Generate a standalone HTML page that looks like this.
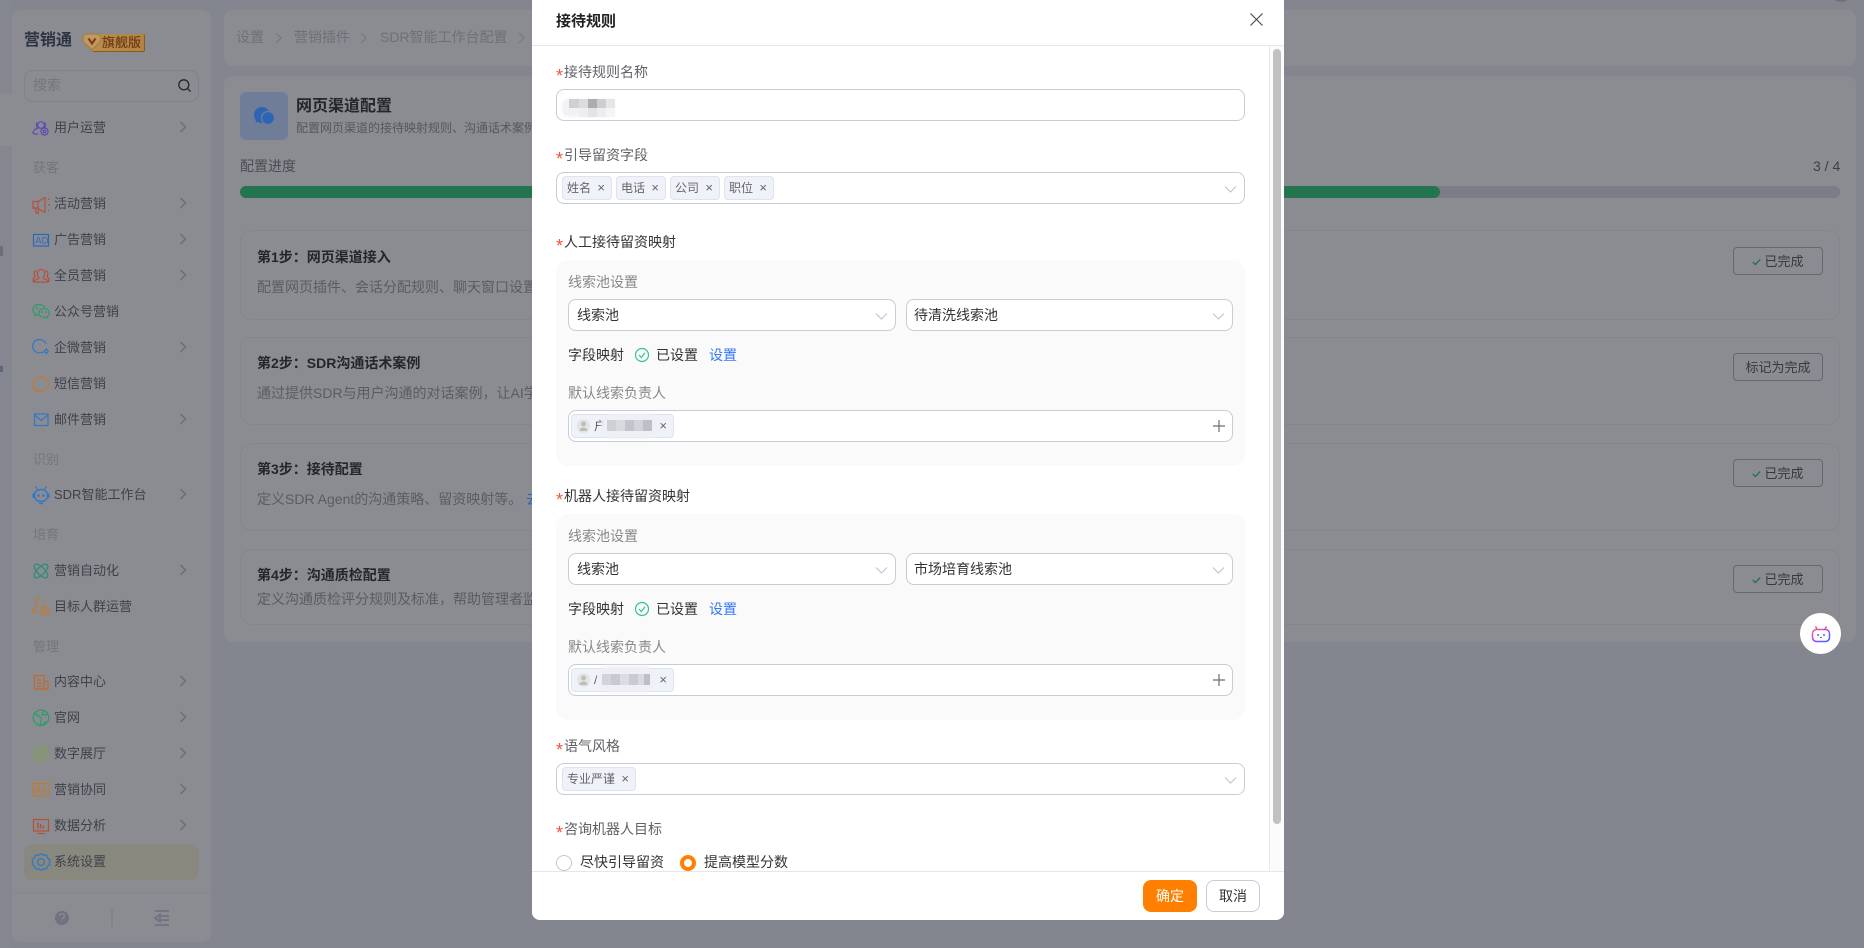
<!DOCTYPE html>
<html lang="zh-CN"><head><meta charset="utf-8"><title>接待规则</title>
<style>
*{box-sizing:border-box}
html,body{margin:0;padding:0;width:1864px;height:948px;overflow:hidden;background:#83868f;font-family:"Liberation Sans","Noto Sans CJK SC",sans-serif}
.a,.t,svg{position:absolute}
.t{white-space:nowrap;line-height:20px;font-size:14px}
.panel{position:absolute;background:#8b8c91;border-radius:9px}
.m{font-size:13px;color:#3f4148;left:54px}
.sec{font-size:13px;color:#74767c;left:33px}
.card{position:absolute;left:240px;width:1600px;border:1px solid #84868d;border-radius:12px}
.st{left:257px;font-weight:700;color:#24262c}
.sd{left:257px;color:#5a5c62}
.btn{position:absolute;left:1733px;width:90px;height:28px;border:1px solid #66686f;border-radius:4px;font-size:13px;color:#36383e;line-height:27px;text-align:center;white-space:nowrap}
.btn svg{position:static;display:inline-block;margin-right:3px;vertical-align:0}
#modal{position:absolute;left:532px;top:0;width:752px;height:920px;background:#fff;border-radius:0 0 8px 8px;overflow:hidden}
#modal .t{color:#333}
.lb{color:#5f6166!important}
.star{position:absolute;color:#f5533d;font-size:18px;line-height:20px}
.in{position:absolute;height:32px;background:#fff;border:1px solid #c9cbd8;border-radius:8px}
.tag{position:absolute;height:24px;background:#f0f2fa;border:1px solid #dfe2ef;border-radius:4px;font-size:12px;line-height:22px;color:#666;padding-left:4px;white-space:nowrap}
.tag i{position:absolute;right:6px;top:0;font-style:normal;font-size:13px;color:#666}
.box{position:absolute;left:24px;width:689px;height:206px;background:#fafafa;border-radius:12px}
.gl{color:#888!important}
.pix{position:absolute;background:#c6c7cc}
</style></head><body>

<!-- page background edge -->
<div class="a" style="left:0;top:93px;width:12px;height:53px;background:#8b8c91"></div>
<div class="a" style="left:0;top:0;width:12px;height:94px;background:#84878f;border-radius:0 0 8px 0"></div>
<div class="a" style="left:0;top:146px;width:12px;height:802px;background:#84878f;border-radius:0 8px 0 0"></div>
<div class="a" style="left:0;top:246px;width:3px;height:10px;background:#5c5e66;opacity:.6"></div>
<div class="a" style="left:0;top:366px;width:3px;height:6px;background:#4c5a72;opacity:.7"></div>
<div class="a" style="left:1830px;top:-20px;width:22px;height:22px;border-radius:50%;background:#6f7178"></div>

<!-- sidebar -->
<div class="panel" style="left:12px;top:10px;width:199px;height:932px"></div>
<div class="t" style="left:24px;top:31px;font-size:16px;font-weight:700;color:#2d3344">营销通</div>
<div class="a" style="left:92px;top:34px;width:53px;height:18px;background:linear-gradient(90deg,#b98f4e,#b28443);border-radius:2px;border-right:1px solid #8a5a22;border-bottom:1px solid #8a5a22"></div>
<svg style="left:82px;top:33px" width="20" height="20" viewBox="0 0 20 20"><path d="M5 1h9c3 0 5 2 5 4.500 0 2-1 3.500-2.500 5L10 17 2.500 10C1 8.500 0.500 7 1 5 1.500 2.500 3 1 5 1Z" fill="#c09a5c" stroke="#a77a3c"/><path d="M6.500 5.500 10 10.500l3.500-5" fill="none" stroke="#7a3b1a" stroke-width="2"/></svg>
<div class="t" style="left:102px;top:33px;font-size:13px;color:#6d3917;font-weight:500">旗舰版</div>
<div class="a" style="left:24px;top:70px;width:175px;height:32px;border:1px solid #808289;border-radius:9px"></div>
<div class="t" style="left:33px;top:75px;color:#74767c">搜索</div>
<svg style="left:177px;top:78px" width="15" height="15" viewBox="0 0 15 15" fill="none" stroke="#24262c" stroke-width="1.300"><circle cx="6.800" cy="6.800" r="5"/><path d="m10.500 10.500 3 3"/></svg>

<div class="t m" style="top:118px">用户运营</div>
<div class="t sec" style="top:158px">获客</div>
<div class="t m" style="top:194px">活动营销</div>
<div class="t m" style="top:230px">广告营销</div>
<div class="t m" style="top:266px">全员营销</div>
<div class="t m" style="top:302px">公众号营销</div>
<div class="t m" style="top:338px">企微营销</div>
<div class="t m" style="top:374px">短信营销</div>
<div class="t m" style="top:410px">邮件营销</div>
<div class="t sec" style="top:450px">识别</div>
<div class="t m" style="top:485px">SDR智能工作台</div>
<div class="t sec" style="top:525px">培育</div>
<div class="t m" style="top:561px">营销自动化</div>
<div class="t m" style="top:597px">目标人群运营</div>
<div class="t sec" style="top:637px">管理</div>
<div class="t m" style="top:672px">内容中心</div>
<div class="t m" style="top:708px">官网</div>
<div class="t m" style="top:744px">数字展厅</div>
<div class="t m" style="top:780px">营销协同</div>
<div class="t m" style="top:816px">数据分析</div>
<div class="a" style="left:24px;top:844px;width:175px;height:36px;background:#89887f;border-radius:9px"></div>
<div class="t m" style="top:852px">系统设置</div>

<svg style="left:0;top:0;width:220px;height:948px" viewBox="0 0 220 948" fill="none">
<g stroke="#6e7078" stroke-width="1.600" transform="translate(1.500 0)">
<path d="m179 122 5 5-5 5M179 198 184 203 179 208M179 234l5 5-5 5M179 270l5 5-5 5M179 342l5 5-5 5M179 414l5 5-5 5M179 489l5 5-5 5M179 565l5 5-5 5M179 676l5 5-5 5M179 712l5 5-5 5M179 748l5 5-5 5M179 784l5 5-5 5M179 820l5 5-5 5"/>
</g>
<g stroke-width="1.200">
<!-- user ops -->
<g stroke="#5f4bb4"><circle cx="41" cy="125" r="3.300"/><path d="M37.500 122.500c-2 1-1 5 .3 5.500-2.800 1-4.800 3-4.800 5 1 1.500 3.500 1.500 5 .5M44.500 122.500c1.500 1 1.300 4-.2 5.300 1 .2 2 .6 2.700 1.200"/><circle cx="44.500" cy="131.500" r="3.600"/><circle cx="44.500" cy="131.500" r="1.400"/></g>
<!-- megaphone -->
<g stroke="#b5503a"><path d="M33 201.500h5v6.500h-5ZM38 201.500l7-4v15l-7-4M35 208l1 5h2.500l-.7-5M48 199.500l1.500-1M48 205h2M48 210l1.500 1"/></g>
<!-- AD -->
<rect x="33.500" y="234.500" width="15" height="11.500" stroke="#2f66c0"/>
<!-- staff -->
<g stroke="#b5503a"><path d="M41 269.500c-2.500 0-3.800 2-3.800 4 0 1.500.7 2.800 1.500 3.800v1.200l-4.700 2v1.500h14v-1.500l-4.700-2v-1.200c.8-1 1.500-2.300 1.500-3.800 0-2-1.300-4-3.800-4ZM36.500 270.500c-1.800.5-2.500 2-2.300 3.800.1 1 .6 1.800 1 2.500l-2 1.500v3h1.800M45.500 270.500c1.800.5 2.500 2 2.300 3.800-.1 1-.6 1.800-1 2.500l2 1.500v3h-1.800"/></g>
<!-- wechat -->
<g stroke="#2c9c6a"><path d="M44.500 307.500c-.8-1.800-3-3-5.500-3-3.300 0-6 2.300-6 5.200 0 1.600.9 3 2.200 4l-.5 2 2.400-1.100c.5.100 1 .2 1.500.2"/><ellipse cx="44" cy="313" rx="5.200" ry="4.500"/><path d="m46.500 317 1 1.800"/><circle cx="37" cy="308.500" r=".4"/><circle cx="42" cy="312" r=".4"/><circle cx="46" cy="312" r=".4"/></g>
<!-- wecom -->
<g stroke="#2f78c8"><path d="M39.500 339.500c-3.800 0-6.800 3-6.800 6.700 0 3.700 3 6.600 6.800 6.600 1 0 2-.2 3-.6l1 .3M46 344c-.8-2.600-3.500-4.500-6.500-4.500"/><path d="m46.300 349 2 2.300-2 2.200-2-2.200Z"/></g>
<!-- sms -->
<g stroke="#c4782f"><path d="M40.700 377c-4.200 0-7.700 3.200-7.700 7.200 0 2.300 1.100 4.300 2.700 5.600l-.5 2.200 2.800-1c.9.300 1.800.4 2.700.4 4.200 0 7.800-3.200 7.800-7.200s-3.600-7.200-7.800-7.200Z"/></g>
<!-- mail -->
<g stroke="#2f78c8"><rect x="34.500" y="414" width="13.500" height="11.500"/><path d="m34.500 415 6.700 5.300 6.800-5.300"/></g>
<!-- SDR robot -->
<g stroke="#2f78c8" stroke-width="1.400"><path d="M41 489.500c-4 0-6.500 2.500-6.500 6s2.500 6 6.500 6 6.500-2.500 6.500-6-2.500-6-6.500-6ZM34.500 493.500c-1 .5-1.500 1.200-1.500 2.200s.5 1.800 1.500 2.200M47.500 493.500c1 .5 1.500 1.200 1.500 2.200s-.5 1.800-1.500 2.200M37 489l-1-2.500M45 489l1-2.500M39 503.500h4"/><circle cx="38.500" cy="495.500" r=".6"/><circle cx="43.500" cy="495.500" r=".6"/></g>
<!-- automation -->
<g stroke="#2b8f7a" stroke-width="1.300"><ellipse cx="41" cy="571" rx="3.800" ry="8.800" transform="rotate(45 41 571)"/><ellipse cx="41" cy="571" rx="3.800" ry="8.800" transform="rotate(-45 41 571)"/></g>
<!-- audience -->
<g stroke="#c4782f"><path d="M40 597.500c-2.600 0-4.300 2-4.300 4.300 0 1.500.7 2.700 1.600 3.500-.5 1.500-2 2.200-3.300 3.200-.8.700-1.300 2-1.300 3.500h6.500M43 600.500c.7 1 1 1.800 1 3"/><circle cx="44.800" cy="610.500" r="4.200"/><circle cx="44.800" cy="610.500" r="1.700"/></g>
<!-- content -->
<g stroke="#c4682a"><path d="M34.500 675.500h9.500v13.500h-9.500Z"/><path d="M44 681h4v8h-4M37 680h3.500M37 683h5M37 686h5"/></g>
<!-- website -->
<g stroke="#2c9c6a" stroke-width="1.300"><circle cx="41" cy="717.700" r="7.700"/><path d="M34 714.500c2-.5 3.500 0 4.500 1.500 1 1.200 2.500 1 3 2.500.4 1.300-.7 2.500-1 3.500-.2 1 .2 2.300.7 3.200M45 710.800c-.8 1.200-2.300 1.500-3 2.700-.4.900.6 1.700 1.800 1.500 1.400-.2 2.600-.6 4.300-.2M43 723.500c1-1 3-1.500 4.500-1.500"/></g>
<!-- hall -->
<g stroke="#7fa73e" stroke-width="1.200"><circle cx="41" cy="754" r="7.200"/><path d="M39.800 757.800c-1.800.8-3-1.500-1.800-2.800l3.200-3.500c1.300-1.300 3.300.2 2.500 1.800l-2 2.200"/></g>
<!-- collaboration -->
<g stroke="#c4782f"><path d="M49.500 787v-3.500H33v12.500h11"/><circle cx="38" cy="787.500" r="1.800"/><path d="M35 793c.7-2.500 5.300-2.500 6 0M43 786h3.500M43 789h1"/><circle cx="46.500" cy="792.500" r="3"/></g>
<!-- analysis -->
<g stroke="#b5503a"><rect x="33.500" y="819.500" width="15" height="11.500"/><path d="M37 833.500h7.500"/></g>
<path d="M38 822.500v6M40.700 824v4.500M43.400 825.500v3" stroke="#b5503a" stroke-width="1.500"/>
<!-- settings -->
<g stroke="#2f78c8" stroke-width="1.300"><path d="M41 853.500l2.500 1.800 3-.2 1.200 2.800 2.300 1.900-.9 2.200.9 2.200-2.300 1.900-1.200 2.800-3-.2-2.500 1.800-2.500-1.800-3 .2-1.200-2.800-2.300-1.900.9-2.200-.9-2.200 2.300-1.900 1.200-2.800 3 .2Z"/><circle cx="41" cy="862" r="3.400"/></g>
</g>
<text x="35.300" y="243.500" font-family="Liberation Sans" font-size="9.500" fill="#2f66c0">AD</text>
<path d="M12 893h199" stroke="#84868d"/>
<circle cx="62" cy="918" r="7" fill="#6f7280"/>
<path d="M59.500 916c0-3 5-3 5 0 0 2-2.500 2-2.500 3.500M62 921v1" stroke="#8b8c91" stroke-width="1.300"/>
<path d="M112 908v19" stroke="#797b83"/>
<path d="M155 911h14M161 916h8M161 920h8M155 925h14M160 914.500l-5 3.500 5 3.500Z" stroke="#6f7280" stroke-width="1.800"/>
</svg>

<!-- breadcrumb -->
<div class="panel" style="left:224px;top:10px;width:1632px;height:56px"></div>
<div class="t" style="left:236px;top:27px;color:#6d7076">设置</div>
<div class="t" style="left:294px;top:27px;color:#6d7076">营销插件</div>
<div class="t" style="left:380px;top:27px;color:#6d7076">SDR智能工作台配置</div>
<svg style="left:270px;top:30px" width="260" height="16" fill="none" stroke="#74767d" stroke-width="1.100"><path d="m6 3 5 5-5 5M91 3l5 5-5 5M249 3l5 5-5 5"/></svg>

<!-- main -->
<div class="panel" style="left:224px;top:76px;width:1632px;height:566px"></div>
<div class="a" style="left:240px;top:92px;width:48px;height:48px;background:#6f7d98;border-radius:6px"></div>
<svg style="left:253px;top:106px" width="24" height="20" viewBox="0 0 24 20"><path d="M9 1a8 8 0 0 0-8 8c0 2.500 1 4 2 5l-.5 3 3-1.500A9 9 0 0 0 9 16Z" fill="#2c65b4"/><circle cx="9" cy="9" r="8" fill="#2c65b4"/><circle cx="15" cy="12" r="6.500" fill="#2c65b4" stroke="#6f7d98" stroke-width="1.300"/></svg>
<div class="t" style="left:296px;top:97px;font-size:16px;font-weight:700;color:#24262c">网页渠道配置</div>
<div class="t" style="left:296px;top:118px;font-size:12px;color:#55575e">配置网页渠道的接待映射规则、沟通话术案例等</div>
<div class="t" style="left:240px;top:156px;color:#4b4d54">配置进度</div>
<div class="t" style="left:1813px;top:156px;color:#3d3f46">3 / 4</div>
<div class="a" style="left:240px;top:186px;width:1600px;height:12px;background:#7a7d88;border-radius:6px"></div>
<div class="a" style="left:240px;top:186px;width:1200px;height:12px;background:#24754f;border-radius:6px"></div>

<div class="card" style="top:230px;height:90px"></div>
<div class="card" style="top:337px;height:88px"></div>
<div class="card" style="top:443px;height:88px"></div>
<div class="card" style="top:549px;height:76px"></div>

<div class="t st" style="top:247px">第1步：网页渠道接入</div>
<div class="t sd" style="top:277px">配置网页插件、会话分配规则、聊天窗口设置等</div>
<div class="t st" style="top:353px">第2步：SDR沟通话术案例</div>
<div class="t sd" style="top:383px">通过提供SDR与用户沟通的对话案例，让AI学习</div>
<div class="t st" style="top:459px">第3步：接待配置</div>
<div class="t sd" style="top:489px">定义SDR Agent的沟通策略、留资映射等。 <span style="color:#2b62b5">去配置</span></div>
<div class="t st" style="top:565px">第4步：沟通质检配置</div>
<div class="t sd" style="top:589px">定义沟通质检评分规则及标准，帮助管理者监督</div>

<div class="btn" style="top:247px"><svg width="9" height="8" viewBox="0 0 9 8" fill="none" stroke="#24754f" stroke-width="1.400"><path d="m.8 4 2.600 2.500L8.200 1.500"/></svg>已完成</div>
<div class="btn" style="top:353px">标记为完成</div>
<div class="btn" style="top:459px"><svg width="9" height="8" viewBox="0 0 9 8" fill="none" stroke="#24754f" stroke-width="1.400"><path d="m.8 4 2.600 2.500L8.200 1.500"/></svg>已完成</div>
<div class="btn" style="top:565px"><svg width="9" height="8" viewBox="0 0 9 8" fill="none" stroke="#24754f" stroke-width="1.400"><path d="m.8 4 2.600 2.500L8.200 1.500"/></svg>已完成</div>

<!-- float bot -->
<div class="a" style="left:1800px;top:613px;width:41px;height:41px;background:#fff;border-radius:50%"></div>
<svg style="left:1810px;top:624px" width="22" height="20" viewBox="0 0 22 20" fill="none"><defs><linearGradient id="g" x1="0" y1="0" x2="1" y2="1"><stop offset="0" stop-color="#ff5a8a"/><stop offset=".5" stop-color="#a04cf0"/><stop offset="1" stop-color="#2a6cff"/></linearGradient></defs><rect x="2.500" y="5.500" width="17" height="12" rx="4" stroke="url(#g)" stroke-width="1.500"/><path d="M7 5 5.500 2.500M15 5l1.500-2.500" stroke="#f0507a" stroke-width="1.500"/><circle cx="8" cy="11" r="1" fill="#7a55f0"/><circle cx="14" cy="11" r="1" fill="#7a55f0"/><path d="M10 13.500h2" stroke="#7a55f0"/></svg>

<!-- modal -->
<div id="modal">
<div class="t" style="left:24px;top:12px;font-size:15px;font-weight:700;color:#222">接待规则</div>
<svg style="left:717px;top:12px" width="15" height="15" fill="none" stroke="#4a4d55" stroke-width="1.200"><path d="m1.500 1.500 12 12M13.500 1.500l-12 12"/></svg>
<div class="a" style="left:0;top:45px;width:752px;height:1px;background:#e6e7ea"></div>
<div class="a" style="left:737px;top:46px;width:15px;height:825px;background:#fbfbfb;border-left:1px solid #e9e9e9"></div>
<div class="a" style="left:741px;top:49px;width:8px;height:775px;background:#c1c1c1;border-radius:4px"></div>

<span class="star" style="left:24px;top:66px">*</span><div class="t lb" style="left:32px;top:62px">接待规则名称</div>
<div class="in" style="left:24px;top:89px;width:689px"></div>
<div class="a" style="left:30px;top:99px;width:53px;height:18px;background:#f2f2f4;border-radius:7px;filter:blur(1px)"></div>
<div class="pix" style="left:37px;top:99px;width:10px;height:9px;background:#d0d0d3"></div><div class="pix" style="left:47px;top:99px;width:9px;height:9px;background:#dcdcdf"></div><div class="pix" style="left:56px;top:99px;width:9px;height:9px;background:#acadb2"></div><div class="pix" style="left:65px;top:99px;width:9px;height:9px;background:#cdced1"></div><div class="pix" style="left:74px;top:99px;width:9px;height:9px;background:#e6e6e8"></div>
<div class="pix" style="left:47px;top:108px;width:9px;height:9px;background:#eeeef0"></div><div class="pix" style="left:56px;top:108px;width:9px;height:9px;background:#e4e4e6"></div><div class="pix" style="left:65px;top:108px;width:9px;height:9px;background:#ededef"></div><div class="pix" style="left:74px;top:108px;width:9px;height:9px;background:#f5f5f6"></div>

<span class="star" style="left:24px;top:149px">*</span><div class="t lb" style="left:32px;top:145px">引导留资字段</div>
<div class="in" style="left:24px;top:172px;width:689px"></div>
<div class="tag" style="left:30px;top:176px;width:50px">姓名<i>×</i></div>
<div class="tag" style="left:84px;top:176px;width:50px">电话<i>×</i></div>
<div class="tag" style="left:138px;top:176px;width:50px">公司<i>×</i></div>
<div class="tag" style="left:192px;top:176px;width:50px">职位<i>×</i></div>
<svg style="left:692px;top:185px" width="13" height="9" fill="none" stroke="#bfc1c9"><path d="m1 1.500 5.500 5.500L12 1.500"/></svg>

<span class="star" style="left:24px;top:236px">*</span><div class="t" style="left:32px;top:232px">人工接待留资映射</div>
<div class="box" style="top:260px"></div>
<div class="t gl" style="left:36px;top:272px">线索池设置</div>
<div class="in" style="left:36px;top:299px;width:328px"></div><div class="t" style="left:45px;top:305px">线索池</div>
<div class="in" style="left:374px;top:299px;width:327px"></div><div class="t" style="left:382px;top:305px">待清洗线索池</div>
<svg style="left:343px;top:312px" width="13" height="9" fill="none" stroke="#bfc1c9"><path d="m1 1.500 5.500 5.500L12 1.500"/></svg>
<svg style="left:680px;top:312px" width="13" height="9" fill="none" stroke="#bfc1c9"><path d="m1 1.500 5.500 5.500L12 1.500"/></svg>
<div class="t" style="left:36px;top:345px">字段映射</div>
<svg style="left:102px;top:347px" width="16" height="16" fill="none" stroke="#35c38a" stroke-width="1.200"><circle cx="8" cy="8" r="6.500"/><path d="m5 8 2.300 2.500L11 5.800"/></svg>
<div class="t" style="left:124px;top:345px">已设置</div>
<div class="t" style="left:177px;top:345px;color:#3478f6">设置</div>
<div class="t gl" style="left:36px;top:383px">默认线索负责人</div>
<div class="in" style="left:36px;top:410px;width:665px"></div>
<div class="tag" style="left:39px;top:414px;width:103px"><i>×</i></div>
<svg style="left:45px;top:419px" width="13" height="14" viewBox="0 0 13 14"><ellipse cx="6.500" cy="7" rx="6.500" ry="7" fill="#e4e4e4"/><circle cx="6.500" cy="5" r="2.500" fill="#bdbdbd"/><path d="M2.500 12c.5-3 2-3.500 4-3.500s3.500.5 4 3.500Z" fill="#bdbdbd"/></svg>
<div class="t" style="left:62px;top:416px;font-size:12px;color:#555">户</div>
<div class="a" style="left:69px;top:414px;width:58px;height:24px;background:#eef0f5;border-radius:10px;filter:blur(1.500px)"></div>
<div class="pix" style="left:75px;top:420px;width:9px;height:11px;background:#cfd0d6"></div><div class="pix" style="left:84px;top:420px;width:9px;height:11px;background:#d9dae0"></div><div class="pix" style="left:93px;top:420px;width:9px;height:11px;background:#c4c5cc"></div><div class="pix" style="left:102px;top:420px;width:9px;height:11px;background:#d3d4da"></div><div class="pix" style="left:111px;top:420px;width:9px;height:11px;background:#bfc0c7"></div>
<svg style="left:680px;top:419px" width="14" height="14" stroke="#6b6e76" stroke-width="1.200"><path d="M7 1v12M1 7h12"/></svg>

<span class="star" style="left:24px;top:490px">*</span><div class="t" style="left:32px;top:486px">机器人接待留资映射</div>
<div class="box" style="top:514px"></div>
<div class="t gl" style="left:36px;top:526px">线索池设置</div>
<div class="in" style="left:36px;top:553px;width:328px"></div><div class="t" style="left:45px;top:559px">线索池</div>
<div class="in" style="left:374px;top:553px;width:327px"></div><div class="t" style="left:382px;top:559px">市场培育线索池</div>
<svg style="left:343px;top:566px" width="13" height="9" fill="none" stroke="#bfc1c9"><path d="m1 1.500 5.500 5.500L12 1.500"/></svg>
<svg style="left:680px;top:566px" width="13" height="9" fill="none" stroke="#bfc1c9"><path d="m1 1.500 5.500 5.500L12 1.500"/></svg>
<div class="t" style="left:36px;top:599px">字段映射</div>
<svg style="left:102px;top:601px" width="16" height="16" fill="none" stroke="#35c38a" stroke-width="1.200"><circle cx="8" cy="8" r="6.500"/><path d="m5 8 2.300 2.500L11 5.800"/></svg>
<div class="t" style="left:124px;top:599px">已设置</div>
<div class="t" style="left:177px;top:599px;color:#3478f6">设置</div>
<div class="t gl" style="left:36px;top:637px">默认线索负责人</div>
<div class="in" style="left:36px;top:664px;width:665px"></div>
<div class="tag" style="left:39px;top:668px;width:103px"><i>×</i></div>
<svg style="left:45px;top:673px" width="13" height="14" viewBox="0 0 13 14"><ellipse cx="6.500" cy="7" rx="6.500" ry="7" fill="#e4e4e4"/><circle cx="6.500" cy="5" r="2.500" fill="#bdbdbd"/><path d="M2.500 12c.5-3 2-3.500 4-3.500s3.500.5 4 3.500Z" fill="#bdbdbd"/></svg>
<div class="t" style="left:62px;top:670px;font-size:12px;color:#555">/</div>
<div class="a" style="left:66px;top:666px;width:56px;height:26px;background:#eef0f5;border-radius:10px;filter:blur(1.500px)"></div>
<div class="pix" style="left:70px;top:674px;width:9px;height:11px;background:#d3d4da"></div><div class="pix" style="left:79px;top:674px;width:9px;height:11px;background:#c9cad1"></div><div class="pix" style="left:88px;top:674px;width:9px;height:11px;background:#dcdde2"></div><div class="pix" style="left:97px;top:674px;width:9px;height:11px;background:#cacbd2"></div><div class="pix" style="left:106px;top:674px;width:9px;height:11px;background:#dadbe0"></div><div class="pix" style="left:112px;top:674px;width:6px;height:11px;background:#bfc0c7"></div>
<svg style="left:680px;top:673px" width="14" height="14" stroke="#6b6e76" stroke-width="1.200"><path d="M7 1v12M1 7h12"/></svg>

<span class="star" style="left:24px;top:740px">*</span><div class="t lb" style="left:32px;top:736px">语气风格</div>
<div class="in" style="left:24px;top:763px;width:689px"></div>
<div class="tag" style="left:30px;top:767px;width:74px">专业严谨<i>×</i></div>
<svg style="left:692px;top:776px" width="13" height="9" fill="none" stroke="#bfc1c9"><path d="m1 1.500 5.500 5.500L12 1.500"/></svg>

<span class="star" style="left:24px;top:823px">*</span><div class="t lb" style="left:32px;top:819px">咨询机器人目标</div>
<div class="a" style="left:24px;top:855px;width:16px;height:16px;border:1px solid #c4c6ce;border-radius:50%"></div>
<div class="t" style="left:48px;top:852px">尽快引导留资</div>
<div class="a" style="left:148px;top:855px;width:16px;height:16px;border:4px solid #ff8000;border-radius:50%;background:#fff"></div>
<div class="t" style="left:172px;top:852px">提高模型分数</div>

<div class="a" style="left:0;top:871px;width:752px;height:49px;background:#fff;border-top:1px solid #e6e7ea"></div>
<div class="a" style="left:611px;top:880px;width:54px;height:32px;background:#ff8000;border-radius:8px;color:#fff;font-size:14px;line-height:32px;text-align:center">确定</div>
<div class="a" style="left:674px;top:880px;width:54px;height:32px;background:#fff;border:1px solid #c9cbd8;border-radius:8px;color:#333;font-size:14px;line-height:30px;text-align:center">取消</div>
</div>
</body></html>
